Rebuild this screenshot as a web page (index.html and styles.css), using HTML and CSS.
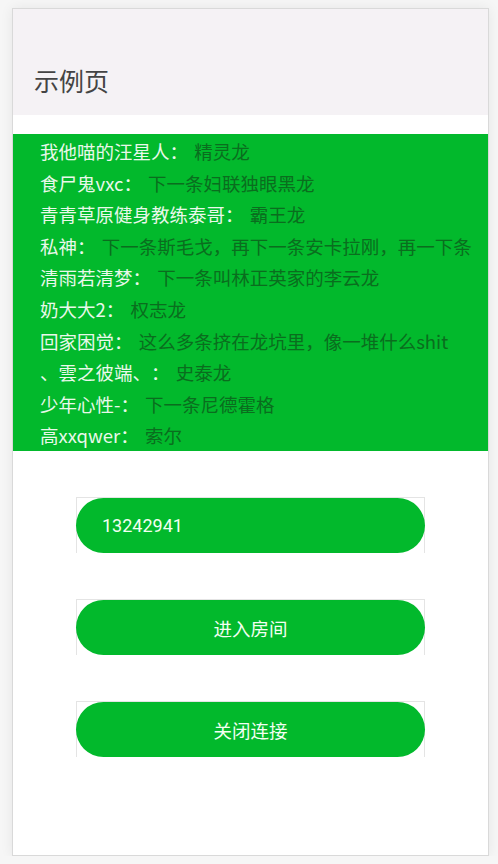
FILE: index.html
```html
<!DOCTYPE html>
<html lang="zh-CN">
<head>
<meta charset="utf-8">
<title>示例页</title>
<link rel="stylesheet" href="styles.css">
</head>
<body>
<div class="frame">
  <header class="header"><h1 class="title">示例页</h1></header>
  <ul class="list">
    <li class="item"><span class="name">我他喵的汪星人：</span> <span class="msg">精灵龙</span></li>
    <li class="item"><span class="name">食尸鬼vxc：</span> <span class="msg">下一条妇联独眼黑龙</span></li>
    <li class="item"><span class="name">青青草原健身教练泰哥：</span> <span class="msg">霸王龙</span></li>
    <li class="item"><span class="name">私神：</span> <span class="msg">下一条斯毛戈，再下一条安卡拉刚，再一下条</span></li>
    <li class="item"><span class="name">清雨若清梦：</span> <span class="msg">下一条叫林正英家的李云龙</span></li>
    <li class="item"><span class="name">奶大大2：</span> <span class="msg">权志龙</span></li>
    <li class="item"><span class="name">回家困觉：</span> <span class="msg">这么多条挤在龙坑里，像一堆什么shit</span></li>
    <li class="item"><span class="name">、雲之彼端、：</span> <span class="msg">史泰龙</span></li>
    <li class="item"><span class="name">少年心性-：</span> <span class="msg">下一条尼德霍格</span></li>
    <li class="item"><span class="name">高xxqwer：</span> <span class="msg">索尔</span></li>
  </ul>
  <div class="controls">
    <div class="box"><div class="pill input">13242941</div></div>
    <div class="box"><div class="pill btn">进入房间</div></div>
    <div class="box"><div class="pill btn">关闭连接</div></div>
  </div>
</div>
</body>
</html>
```

FILE: styles.css
```css
html, body {
  margin: 0;
  padding: 0;
  background: #f6f6f6;
  font-family: "Noto Sans CJK SC", "Noto Sans", Roboto, sans-serif;
}
.frame {
  box-sizing: border-box;
  margin: 8px 0 0 12px;
  width: 477px;
  height: 848px;
  border: 1px solid #d9d9d9;
  background: #ffffff;
  box-shadow: 0 0 12px rgba(0, 0, 0, 0.07);
  overflow: hidden;
  text-spacing-trim: space-all;
}
.header {
  background: #f5f2f5;
  height: 106px;
  box-sizing: border-box;
  padding: 55px 0 0 21px;
}
.title {
  margin: 0;
  font-weight: 400;
  font-size: 25px;
  line-height: 32px;
  color: #444444;
}
.list {
  list-style: none;
  margin: 19px 0 0 0;
  padding: 2px 0 0 27px;
  height: 317px;
  box-sizing: border-box;
  background: #02b92c;
  overflow: hidden;
}
.item {
  font-size: 18.5px;
  line-height: 31.6px;
  height: 31.6px;
  white-space: nowrap;
  overflow: hidden;
}
.name {
  color: #e9f8ea;
}
.msg {
  color: #0a6d1e;
  margin-left: 2px;
}
.controls {
  display: flex;
  flex-direction: column;
  align-items: center;
  gap: 46px;
  padding-top: 46px;
}
.box {
  box-sizing: border-box;
  width: 349px;
  height: 56px;
  border: 1px solid #e4e4e4;
  border-bottom: none;
}
.pill {
  height: 55px;
  border-radius: 28px;
  background: #02b92c;
  margin: 0 -1px;
  display: flex;
  align-items: center;
  font-size: 18.5px;
  color: #f2fff2;
}
.input {
  padding-left: 26px;
  font-family: Roboto, "Noto Sans CJK SC", sans-serif;
  font-size: 18px;
}
.btn {
  justify-content: center;
}
```
